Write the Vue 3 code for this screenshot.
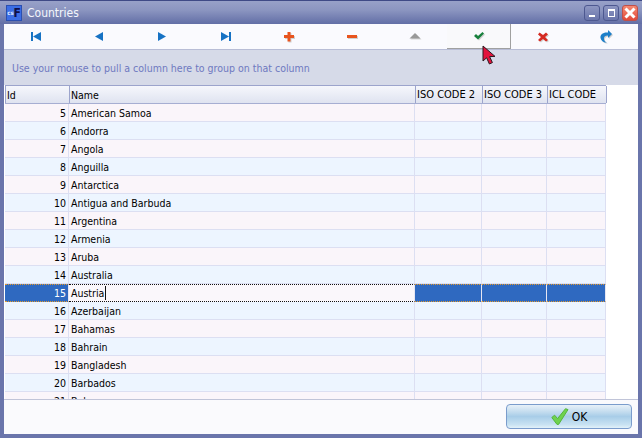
<template>
  <div class="window">
    <div class="titlebar">
      <div class="app-icon"><span class="app-small">cs</span><span class="app-f">F</span></div>
      <span class="title">Countries</span>
      <div class="win-buttons">
        <div class="win-btn"><span class="glyph-min"></span></div>
        <div class="win-btn"><span class="glyph-max"></span></div>
        <div class="win-btn close">
          <svg width="14" height="14" viewBox="0 0 14 14"><path d="M2.5 2.5 11.5 11.5M11.5 2.5 2.5 11.5" stroke="#fff" stroke-width="3" /></svg>
        </div>
      </div>
    </div>

    <div class="content">
      <div class="toolbar">
        <div v-for="(b, i) in navButtons" :key="i" class="nav-btn" :class="{ active: b.active }">
          <svg width="16" height="16" viewBox="0 0 16 16">
            <path v-if="b.shadow" :d="b.d" :fill="b.shadow" transform="translate(1 1)" />
            <path :d="b.d" :fill="b.fill" />
          </svg>
        </div>
      </div>

      <div class="group-panel">Use your mouse to pull a column here to group on that column</div>

      <div class="grid-area">
        <div class="grid">
          <div class="row head">
            <div v-for="c in columns" :key="c" class="head-cell">{{ c }}</div>
          </div>
          <div
            v-for="(r, i) in rows"
            :key="r.id"
            class="row"
            :class="[i % 2 ? 'alt' : 'even', { selected: r.id === 15 }]"
          >
            <div class="cell id">{{ r.id }}</div>
            <div class="cell name">{{ r.name }}<span v-if="r.id === 15" class="caret"></span></div>
            <div class="cell"></div>
            <div class="cell"></div>
            <div class="cell"></div>
          </div>
        </div>
      </div>

      <div class="footer">
        <button class="ok-btn" type="button">
          <svg width="18" height="17" viewBox="0 0 18 17">
            <path d="M0.8 9.5 3.6 7.2 6.6 10.6 14.5 0.7 17 1.6 7.6 16.4 6 16.4Z" fill="#6fd24f" stroke="#55b53c" stroke-width="1" />
          </svg>
          <span>OK</span>
        </button>
      </div>
    </div>

    <svg class="cursor" width="15" height="20" viewBox="0 0 15 20">
      <path d="M1 1 1 16 4.6 12.8 7.4 19 10.4 17.6 7.6 11.6 13 11.4Z" fill="#e3123c" stroke="#2a1a20" stroke-width="1" />
    </svg>
  </div>
</template>

<script setup>
const blue = '#1672c4'

const navButtons = [
  { d: 'M3 3h2v9H3zM5 7.5 13 3v9z', fill: blue },
  { d: 'M4 7.5 12 3v9z', fill: blue },
  { d: 'M4 3l8 4.5L4 12z', fill: blue },
  { d: 'M3 3l8 4.5L3 12zM11 3h2v9h-2z', fill: blue },
  { d: 'M6.5 3h3v3H13v3H9.5v3.5h-3V9H3V6h3.5z', fill: '#e8541e', shadow: '#d0d0d0' },
  { d: 'M3 6h10v3H3z', fill: '#e8541e', shadow: '#d0d0d0' },
  { d: 'M8 4 13.5 9.5h-11z', fill: '#999', shadow: '#d5d5d5' },
  { d: 'M3 8l2-2 2 2 4.5-4 1.5 1.5L7 11.5z', fill: '#17803c', shadow: '#cfcfcf' },
  { d: 'M4.5 3.5 8 6l3-2.5L13 5.5 10 8l3 3-2 1.5L8 10l-3 2.5L3 11l3-3-3-2.5z', fill: '#d52a22', shadow: '#d5d5d5' },
  { d: 'M10 1l4 4-4 4V6.5C7 6.5 5.5 8 6 10.5c.3 1.5 1.5 2.5 3 3-3 .5-6-1.5-6.5-4.5C2 5.5 5 3 10 3.5z', fill: '#1d7fc9', shadow: '#cfcfcf' },
]

const columns = ['Id', 'Name', 'ISO CODE 2', 'ISO CODE 3', 'ICL CODE']

const names = [
  'American Samoa', 'Andorra', 'Angola', 'Anguilla', 'Antarctica',
  'Antigua and Barbuda', 'Argentina', 'Armenia', 'Aruba', 'Australia',
  'Austria', 'Azerbaijan', 'Bahamas', 'Bahrain', 'Bangladesh', 'Barbados', 'Belarus',
]

const rows = names.map((name, i) => ({ id: i + 5, name }))

navButtons[7].active = true
</script>

<style>
html, body {
  margin: 0;
  overflow: hidden;
}
</style>

<style scoped>
.window {
  position: relative;
  width: 642px;
  height: 438px;
  box-sizing: border-box;
  display: flex;
  flex-direction: column;
  background: #6a75ab;
  border-top: 1px solid #3f4a86;
  font-family: "DejaVu Sans Condensed", "DejaVu Sans", sans-serif;
  font-stretch: condensed;
  font-size: 10.5px;
  overflow: hidden;
}

.titlebar {
  height: 23px;
  flex: none;
  display: flex;
  align-items: center;
  padding: 0 4px 0 6px;
  background: linear-gradient(#98a1c8, #8b95c0 40%, #626ea6);
}

.app-icon {
  width: 16px;
  height: 16px;
  display: flex;
  align-items: center;
  justify-content: flex-end;
  background: #3c6ee6;
  border: 1px solid #2b4fb0;
  box-sizing: border-box;
  line-height: 1;
}

.app-small {
  font-size: 6px;
  font-weight: 700;
  color: #dbe6ff;
}

.app-f {
  font-size: 12px;
  font-weight: 700;
  color: #10104a;
}

.title {
  margin-left: 5px;
  font-size: 12px;
  color: #f4f6fc;
}

.win-buttons {
  margin-left: auto;
  display: flex;
  gap: 3px;
}

.win-btn {
  width: 16px;
  height: 16px;
  box-sizing: border-box;
  border: 1px solid #4d5890;
  border-radius: 3px;
  background: linear-gradient(#8e97c2, #6a75ab);
  display: flex;
  align-items: center;
  justify-content: center;
}

.win-btn.close {
  background: linear-gradient(#f58a72, #e24a3a);
  border-color: #c0504a;
}

.glyph-min {
  width: 6px;
  height: 2px;
  background: #fff;
  margin-top: 6px;
}

.glyph-max {
  width: 5px;
  height: 5px;
  border: 1px solid #fff;
  border-top-width: 2px;
}

.content {
  flex: 1;
  min-height: 0;
  margin: 0 4px 4px;
  display: flex;
  flex-direction: column;
  background: #fff;
}

.toolbar {
  height: 26px;
  flex: none;
  display: flex;
  background: #fafafe;
  border-bottom: 1px solid #b8bdd6;
  box-sizing: border-box;
}

.nav-btn {
  flex: 1;
  display: flex;
  align-items: center;
  justify-content: center;
}

.nav-btn.active {
  background: #f9f9fb;
  border-right: 1px solid #a0a0a0;
  border-bottom: 1px solid #a0a0a0;
  height: 25px;
  box-sizing: border-box;
}

.group-panel {
  height: 35px;
  flex: none;
  box-sizing: border-box;
  padding: 11px 8px 0;
  background: #d6dae8;
  color: #6f79c0;
  line-height: 15px;
}

.grid-area {
  flex: 1;
  min-height: 0;
  padding-left: 1px;
  background: #fff;
  overflow: hidden;
}

.grid {
  width: 601px;
}

.row {
  display: grid;
  grid-template-columns: 64px 346px 67px 65px 59px;
  grid-template-rows: 18px;
  height: 18px;
  box-sizing: border-box;
}

.head {
  height: 19px;
  grid-template-rows: 17px;
  border-top: 1px solid #9ca4cc;
  border-bottom: 1px solid #a6aed2;
  background: #9ca4cc;
}

.head-cell {
  padding-left: 1px;
  line-height: 18px;
  font-size: 11px;
  color: #000;
  background: linear-gradient(#f6f7fc, #dfe3f0);
  border-left: 1px solid #9ca4cc;
  border-right: 1px solid #9ca4cc;
  margin-right: -1px;
  white-space: nowrap;
  overflow: hidden;
}

.head-cell:nth-child(-n + 2) {
  font-size: 10.5px;
}

.cell {
  box-sizing: border-box;
  border-right: 1px solid #dcdff2;
  border-bottom: 1px solid #dcdff2;
  line-height: 18px;
  color: #000;
  padding-left: 2px;
  white-space: nowrap;
}

.cell.id {
  text-align: right;
  padding: 0 2px 0 0;
}

.even {
  background: #faf5fa;
}

.alt {
  background: #edf5ff;
}

.selected .cell {
  background: #2f69c0;
  color: #fff;
  border-top: 1px dotted #e49a2c;
  border-bottom: 1px dotted #e49a2c;
  border-right: 1px solid #e6e6f2;
  line-height: 16px;
}

.selected .cell.name {
  background: #faf7fb;
  color: #000;
  border-top: 1px dotted #111;
  border-bottom: 1px dotted #111;
}

.caret {
  display: inline-block;
  width: 1px;
  height: 14px;
  background: #111;
  vertical-align: -3px;
  margin-left: 1px;
}

.footer {
  height: 35px;
  flex: none;
  box-sizing: border-box;
  display: flex;
  justify-content: flex-end;
  align-items: flex-start;
  padding: 4px 6px 0 0;
  background: #fafafd;
  border-top: 1px solid #c0c4d8;
}

.ok-btn {
  width: 126px;
  height: 25px;
  display: flex;
  align-items: center;
  justify-content: center;
  gap: 3px;
  padding: 0;
  border: 1px solid #7a9ccc;
  border-radius: 4px;
  background: linear-gradient(#e8f1f9, #c3dcee 30%, #a8cde8 50%, #c8e2f2 85%, #e2f1f9);
  color: #000;
  font-family: inherit;
  font-size: 12px;
}

.cursor {
  position: absolute;
  left: 482px;
  top: 44px;
}
</style>
